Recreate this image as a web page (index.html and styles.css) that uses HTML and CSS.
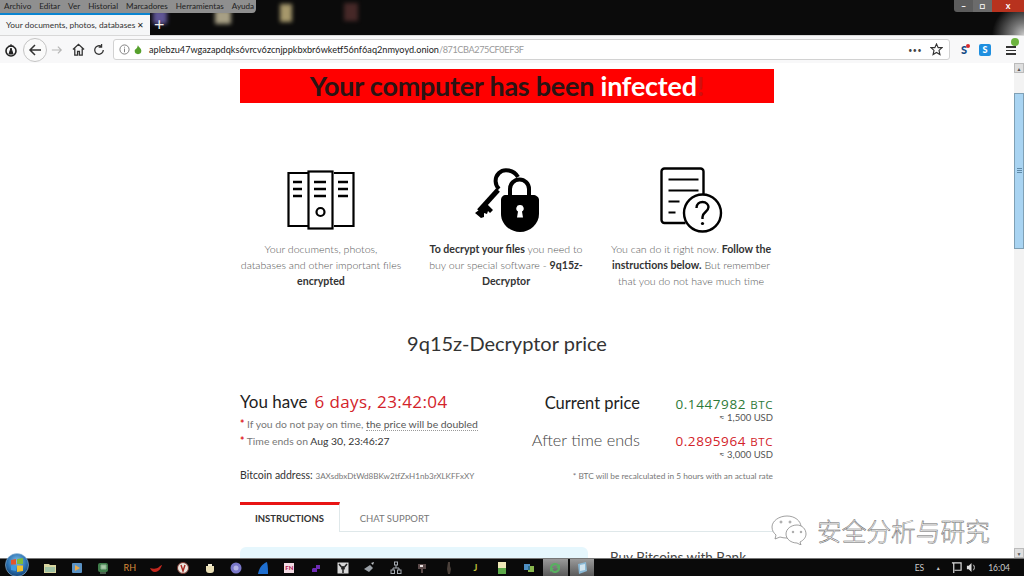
FILE: index.html
```html
<!DOCTYPE html>
<html lang="en">
<head>
<meta charset="utf-8">
<title>Your documents, photos, databases</title>
<link rel="stylesheet" href="styles.css">
</head>
<body>
<div class="screen">
  <header class="chrome">
    <div class="titlearea">
      <div class="desk-icon di1"></div><div class="desk-icon di2"></div><div class="desk-icon di3"></div><div class="desk-icon di4"></div>
      <nav class="menubar"><span>Archivo</span><span>Editar</span><span>Ver</span><span>Historial</span><span>Marcadores</span><span>Herramientas</span><span>Ayuda</span></nav>
      <div class="winbtns"><span class="wb wb-min">&#8211;</span><span class="wb wb-max">&#9633;</span><span class="wb wb-close">x</span></div>
      <div class="tabstrip">
        <div class="tab"><span class="tabtitle">Your documents, photos, databases</span><span class="tabx">&#10005;</span></div>
        <span class="newtab">+</span>
      </div>
    </div>
    <div class="toolbar">
      <svg class="tb-ic first" viewBox="0 0 14 14" width="14" height="14"><circle cx="7" cy="8" r="5" fill="none" stroke="#222" stroke-width="1.6"/><path d="M7 1v3M4.500 3h5M7 5l-2 6h4z" stroke="#222" fill="#222" stroke-width="1"/></svg>
      <span class="backbtn"><svg viewBox="0 0 14 14" width="14" height="14"><path d="M13 7H2M7 2L2 7l5 5" fill="none" stroke="#333" stroke-width="1.500"/></svg></span>
      <svg class="tb-ic fwd" viewBox="0 0 14 14" width="12" height="12"><path d="M1 7h11M8 3l4 4-4 4" fill="none" stroke="#b5b5b5" stroke-width="1.300"/></svg>
      <svg class="tb-ic home" viewBox="0 0 14 14" width="13" height="13"><path d="M1 7l6-5.500L13 7M3 6v7h3V9h2v4h3V6" fill="none" stroke="#333" stroke-width="1.400"/></svg>
      <svg class="tb-ic reload" viewBox="0 0 14 14" width="12" height="12"><path d="M12 7a5 5 0 1 1-2-4M10 0v3.600H6.600" fill="none" stroke="#333" stroke-width="1.500"/></svg>
      <div class="urlbar">
        <svg viewBox="0 0 12 12" width="11" height="11" class="url-i"><circle cx="6" cy="6" r="5" fill="none" stroke="#777"/><path d="M6 5v4M6 3v1" stroke="#777"/></svg>
        <svg viewBox="0 0 12 12" width="10" height="12" class="url-o"><path d="M6 0c0 2 4 4 4 7a4 4 0 0 1-8 0c0-2 2-2 3-4z" fill="#56a02c"/></svg>
        <span class="url-text">aplebzu47wgazapdqks6vrcv6zcnjppkbxbr6wketf56nf6aq2nmyoyd.onion<span class="url-path">/871CBA275CF0EF3F</span></span>
        <span class="url-dots">&#8226;&#8226;&#8226;</span>
        <svg viewBox="0 0 14 14" width="13" height="13" class="url-star"><path d="M7 1l1.800 4H13l-3.300 3 1 4.400L7 10.200 3.300 12.400l1-4.400L1 5h4.200z" fill="none" stroke="#333" stroke-width="1.200"/></svg>
      </div>
      <span class="ext ext1">S<b></b></span>
      <span class="ext ext2">S</span>
      <span class="hamb"><i></i><i></i><i></i><b></b></span>
    </div>
  </header>

  <main class="viewport">
    <div class="page">
      <h1 class="banner">Your computer has been <span class="wht">infected</span><span class="excl">!</span></h1>
      <section class="features">
        <article class="feature">
          <svg class="ficon" viewBox="0 0 68 60" width="68" height="60"><g fill="none" stroke="#000" stroke-width="2.200"><path d="M21 3H1.500v53H21"/><rect x="21.500" y="1.500" width="24" height="57"/><path d="M47 3h19.500v53H47"/><circle cx="33.500" cy="42" r="4"/></g><path d="M6 12h9M6 19h9M6 26h9M27 12h12M27 19h12M27 26h12M51 12h10M51 19h10M51 26h10" stroke="#000" stroke-width="2.400"/></svg>
          <p>Your documents, photos,<br>databases and other important files<br><strong>encrypted</strong></p>
        </article>
        <article class="feature">
          <svg class="ficon" viewBox="-2 0 68 66" width="68" height="66"><g fill="none" stroke="#000"><path d="M44 10C40 3 30 1 25 6c-5 5-4 12 0 16" stroke-width="4"/><path d="M24 23L5 44" stroke-width="5"/><path d="M36 29v-7a9.500 9.500 0 0 1 19 0v7" stroke-width="4"/></g><path d="M13 37l6 6-3 3-2-2-1 3-3-1 0 4-3 1-6-5z" fill="#000"/><path d="M27 33c0-3 2-5 5-5h27c3 0 6 2 6 5v14c0 10-9 18-19 18S27 57 27 47z" fill="#000"/><path d="M46 38a3.500 3.500 0 0 1 2 6.500l1 6h-6l1-6A3.500 3.500 0 0 1 46 38z" fill="#fff"/></svg>
          <p><strong>To decrypt your files</strong> you need to<br>buy our special software - <strong>9q15z-</strong><br><strong>Decryptor</strong></p>
        </article>
        <article class="feature">
          <svg class="ficon" viewBox="-1.500 0 68 66" width="68" height="66"><path d="M45 28V4.500A3 3 0 0 0 42 1.500H6a3 3 0 0 0-3 3V53a3 3 0 0 0 3 3h21" fill="none" stroke="#000" stroke-width="2.400"/><path d="M10 12.500h30M10 23.500h30M10 34.500h11M10 45.500h7" stroke="#000" stroke-width="2.200"/><circle cx="44" cy="46" r="18.500" fill="#fff" stroke="#000" stroke-width="2.400"/><path d="M38 41c0-4 3-6 6-6 4 0 6 3 6 5 0 5-6 5-6 10v2" fill="none" stroke="#000" stroke-width="2.400"/><circle cx="44" cy="56.500" r="1.600"/></svg>
          <p>You can do it right now. <strong>Follow the</strong><br><strong>instructions below.</strong> But remember<br>that you do not have much time</p>
        </article>
      </section>
      <h2 class="price-title">9q15z-Decryptor price</h2>
      <section class="pricing">
        <div class="left">
          <div class="timer"><span class="have">You have</span><span class="count">6 days, 23:42:04</span></div>
          <p class="note"><em>*</em> If you do not pay on time, <span class="dbl">the price will be doubled</span></p>
          <p class="note"><em>*</em> Time ends on <strong>Aug 30, 23:46:27</strong></p>
          <p class="addr"><strong>Bitcoin address:</strong> <span>3AXsdbxDtWd8BKw2tfZxH1nb3rXLKFFxXY</span></p>
        </div>
        <div class="right">
          <div class="row row1"><span class="plabel">Current price</span><span class="amount grn">0.1447982 <small>BTC</small></span></div>
          <div class="usd">&#8776; 1,500 USD</div>
          <div class="row row2"><span class="plabel lt">After time ends</span><span class="amount red">0.2895964 <small>BTC</small></span></div>
          <div class="usd usd2">&#8776; 3,000 USD</div>
          <div class="recalc">* BTC will be recalculated in 5 hours with an actual rate</div>
        </div>
      </section>
      <div class="tabs"><span class="ptab active">INSTRUCTIONS</span><span class="ptab">CHAT SUPPORT</span></div>
      <div class="below">
        <div class="infobox"></div>
        <div class="buy">Buy Bitcoins with Bank</div>
      </div>
    </div>
    <aside class="scrollbar"><span class="sb-btn">&#9650;</span><span class="sb-gap"></span><span class="sb-thumb"><i></i></span><span class="sb-track"></span><span class="sb-btn">&#9660;</span></aside>
    <div class="watermark">
      <svg viewBox="0 0 40 30" width="40" height="30"><g fill="#fff" stroke="#777" stroke-width=".7"><path d="M16 1C8 1 1 6 1 12c0 4 2 6 4 8l-1 4 5-2c2 .6 4 1 6 1C24 23 30 18 30 12S24 1 16 1z"/><path d="M26 10c-6 0-11 4-11 9s5 9 11 9l4 2-1-3c4-2 6-5 6-8 0-5-4-9-9-9z"/><circle cx="10" cy="7" r="1"/><circle cx="19" cy="7" r="1"/><circle cx="22" cy="17" r=".8"/><circle cx="30" cy="17" r=".8"/></g></svg>
      <span>安全分析与研究</span>
    </div>
  </main>

  <footer class="taskbar">
    <svg class="orb" viewBox="0 0 24 24" width="24" height="24"><defs><radialGradient id="og" cx=".5" cy=".35" r=".7"><stop offset="0" stop-color="#7fc0ea"/><stop offset=".6" stop-color="#2a6fb0"/><stop offset="1" stop-color="#123a66"/></radialGradient></defs><circle cx="12" cy="12" r="11.500" fill="url(#og)" stroke="#9cc0dc" stroke-width=".6"/><path d="M6 7l5-1v5.500H6z" fill="#e2552b"/><path d="M12 6l6-1v6h-6z" fill="#7cbb3a"/><path d="M6 12.500h5V18l-5-1z" fill="#3f9be0"/><path d="M12 12.500h6V18l-6 1z" fill="#f2c12e"/></svg>
    <div class="tasks">
      <span class="cell"><svg viewBox="0 0 14 14" width="14" height="14"><path d="M1 3h5l1 1h6v8H1z" fill="#d8d59f"/><path d="M2 6h10v5H2z" fill="#9fc2a5"/></svg></span>
      <span class="cell"><svg viewBox="0 0 14 14" width="14" height="14"><rect x="2" y="2" width="10" height="10" rx="1" fill="#5a92c4"/><path d="M5 4l5 3-5 3z" fill="#e8a94a"/></svg></span>
      <span class="cell"><svg viewBox="0 0 14 14" width="14" height="14"><rect x="2" y="2" width="10" height="9" rx="2" fill="#3f7d4a"/><path d="M5 4h5v4H5zM4 12h6" fill="#a7c9a5" stroke="#8ab090"/></svg></span>
      <span class="cell rh">RH</span>
      <span class="cell"><svg viewBox="0 0 14 14" width="14" height="14"><path d="M1 7c3 1 7 1 9-1 1-1 2-2 3-2-1 3-3 7-7 7-3 0-4-2-5-4z" fill="#c4281f"/></svg></span>
      <span class="cell"><svg viewBox="0 0 14 14" width="14" height="14"><circle cx="7" cy="7" r="5.500" fill="#ece6de" stroke="#7a3a32"/><path d="M5 4l2 6 2-6" fill="none" stroke="#a82820" stroke-width="1.400"/></svg></span>
      <span class="cell"><svg viewBox="0 0 14 14" width="14" height="14"><path d="M3 5h8v4a3 3 0 0 1-3 3H6a3 3 0 0 1-3-3z" fill="#eadfb6"/><path d="M5 3h4v2H5z" fill="#f4eed6"/></svg></span>
      <span class="cell"><svg viewBox="0 0 14 14" width="14" height="14"><circle cx="7" cy="7" r="5.500" fill="#7a78c9"/><circle cx="7" cy="7" r="2.500" fill="#b6b4e6"/></svg></span>
      <span class="cell"><svg viewBox="0 0 14 14" width="14" height="14"><path d="M2 13C3 7 6 3 11 1c1 4 1 8 1 12z" fill="#1f6fd0"/></svg></span>
      <span class="cell"><span class="fn">FN</span></span>
      <span class="cell"><svg viewBox="0 0 14 14" width="14" height="14"><path d="M4 7h3V4h4v4H8v3H3V8z" fill="#6e2bb5"/></svg></span>
      <span class="cell"><svg viewBox="0 0 14 14" width="14" height="14"><rect x="1.500" y="1.500" width="11" height="11" fill="#d8d8d8"/><circle cx="7" cy="7" r="2" fill="#222"/><path d="M3 3l2.500 3M11 3L8.500 6M7 12V9" stroke="#222" stroke-width="1.500"/></svg></span>
      <span class="cell"><svg viewBox="0 0 14 14" width="14" height="14"><path d="M2 8l6-4 3 3-4 4z" fill="#9aa0a6"/><path d="M9 2l3-1-1 3z" fill="#c0c4c8"/></svg></span>
      <span class="cell"><svg viewBox="0 0 14 14" width="14" height="14"><g fill="none" stroke="#a6acb3"><rect x="5.500" y="1" width="3" height="3"/><rect x="2" y="9" width="3.500" height="3.500"/><rect x="8.500" y="9" width="3.500" height="3.500"/><path d="M7 4v3M4 9V7h6v2"/></g></svg></span>
      <span class="cell"><svg viewBox="0 0 14 14" width="14" height="14"><path d="M3 3h8v5H8v4H6V8H3z" fill="#5a4a4a"/><path d="M5 4h3v2H5z" fill="#e8e0e0"/></svg></span>
      <span class="cell"><svg viewBox="0 0 14 14" width="14" height="14"><path d="M6 1h2v4l1 3-1 5H6l-1-5z" fill="#4a403a"/></svg></span>
      <span class="cell jj">J</span>
      <span class="cell"><svg viewBox="0 0 14 14" width="14" height="14"><path d="M3 1h8v12H3z" fill="#efe8b8"/><path d="M3 7h8v6H3z" fill="#5da94a"/></svg></span>
      <span class="cell"><svg viewBox="0 0 14 14" width="14" height="14"><path d="M2 3h6v6H2z" fill="#4f8fc4"/><path d="M6 5h6v6H6z" fill="#8ab84f"/><path d="M6 5h2v4H6z" fill="#2f6f8a"/></svg></span>
      <span class="cell act"><svg viewBox="0 0 14 14" width="14" height="14"><path d="M2 7a5 5 0 0 1 9-3l1-1v4H8l1.500-1.500A3 3 0 0 0 4 7zM12 7a5 5 0 0 1-9 3l-1 1V7h4L4.500 8.500A3 3 0 0 0 10 7z" fill="#58b060"/></svg></span>
      <span class="cell act"><svg viewBox="0 0 14 14" width="14" height="14"><path d="M3 3l8-2 1 9-8 3z" fill="#8ab9d6"/><path d="M5 4l5-1v6l-5 1z" fill="#d2e4ee"/></svg></span>
    </div>
    <div class="tray"><span>ES</span><span class="tr-up">&#9650;</span>
      <svg class="tr-net" viewBox="0 0 12 12" width="11" height="11"><path d="M1 1h10v8H4M3 1v11" fill="none" stroke="#ddd" stroke-width="1.300"/></svg>
      <svg class="tr-vol" viewBox="0 0 12 12" width="11" height="11"><path d="M1 4h2l3-3v10L3 8H1z" fill="#ddd"/><path d="M8 3c1.500 1.500 1.500 4.500 0 6" fill="none" stroke="#ddd"/></svg>
      <span class="clock">16:04</span></div>
  </footer>
</div>
</body>
</html>
```
FILE: styles.css
```css
* { box-sizing: border-box; }
html, body { margin: 0; padding: 0; overflow: hidden; }
body { font-family: Lato, "Open Sans", "Liberation Sans", sans-serif; background: #fff; }
.screen { width: 1024px; height: 576px; display: flex; flex-direction: column; overflow: hidden; position: relative; }

.chrome { flex: none; height: 63px; display: flex; flex-direction: column; }
.titlearea { height: 35px; background: radial-gradient(circle at 1024px 35px, #c8c8c8 0, #777 12px, #0b0b0b 32px); background-color: #0b0b0b; position: relative; display: flex; flex-direction: column; }
.menubar { position: relative; z-index: 1; width: 256px; height: 13px; background: #8f8f8f; border-radius: 0 0 4px 0; display: flex; gap: 8px; padding-left: 4px; font-size: 8.100px; line-height: 13px; color: #222; }
.menubar span { white-space: nowrap; }
.tabstrip { position: relative; z-index: 1; height: 22px; display: flex; align-items: center; }
.tab { width: 150px; height: 22px; background: #f5f6f7; border-top: 2px solid #0a84d0; display: flex; align-items: center; padding: 0 6px; gap: 3px; color: #333; font-size: 8.400px; }
.tabtitle { flex: 1; min-width: 0; white-space: nowrap; }
.tabx { font-size: 8px; color: #222; }
.newtab { color: #eee; font-size: 18px; line-height: 22px; margin-left: 4px; }
.desk-icon { position: absolute; filter: blur(2px); opacity: .8; }
.di1 { left: 153px; top: 10px; width: 14px; height: 14px; background: #7468b8; }
.di2 { left: 215px; top: 10px; width: 16px; height: 14px; background: #cfc5a4; }
.di3 { left: 280px; top: 4px; width: 12px; height: 18px; background: #cdbb84; }
.di4 { left: 344px; top: 3px; width: 14px; height: 18px; background: #55302f; }
.winbtns { position: absolute; right: 0; top: 0; width: 70px; height: 12px; display: flex; font-size: 9px; line-height: 11px; color: #fff; text-align: center; border-radius: 0 0 0 3px; overflow: hidden; }
.wb { display: block; font-weight: 700; }
.wb-min { width: 19px; background: #5c5c5c; }
.wb-max { width: 19px; background: #6b6b6b; }
.wb-close { flex: 1; background: #b8321e; }

.toolbar { height: 28px; background: #f8f8f9; border-top: 1px solid #d8d8d8; display: flex; align-items: center; padding-left: 4px; }
.tb-ic { flex: none; }
.first { margin-right: 5px; }
.backbtn { flex: none; width: 24px; height: 24px; border: 1px solid #c4c4c4; border-radius: 50%; background: #fafafa; display: flex; align-items: center; justify-content: center; }
.fwd { margin-left: 4px; }
.home { margin-left: 8.500px; }
.reload { margin-left: 8.500px; }
.urlbar { flex: none; margin-left: 8px; width: 837px; height: 21px; background: #fff; border: 1px solid #d2d2d2; border-radius: 3px; display: flex; align-items: center; padding: 0 3px 0 5px; }
.url-i { margin-right: 3px; flex: none; }
.url-o { margin-right: 6px; flex: none; }
.url-text { flex: 1; font-size: 9.150px; color: #222; white-space: nowrap; }
.url-path { color: #9a9a9a; letter-spacing: -.4px; }
.url-dots { font-size: 7px; color: #444; margin-right: 8px; letter-spacing: .5px; }
.url-star { margin-right: 3px; }
.ext { flex: none; width: 12px; height: 12px; font-size: 11px; line-height: 12px; font-weight: 900; text-align: center; position: relative; }
.ext1 { margin-left: 8px; color: #124a86; }
.ext1 b { position: absolute; right: 0; top: 0; width: 4px; height: 4px; border-radius: 50%; background: #d8282a; }
.ext2 { margin-left: 9px; background: #1f8fe0; color: #fff; border-radius: 2px; font-size: 9px; }
.hamb { flex: none; margin-left: 15px; width: 10px; display: flex; flex-direction: column; gap: 2px; position: relative; top: 1px; }
.hamb i { display: block; height: 1.500px; background: #333; }
.hamb b { position: absolute; right: -3px; top: -8px; width: 8px; height: 8px; border-radius: 50%; background: #6cb33f; }

.viewport { flex: 1; min-height: 0; display: flex; position: relative; background: #fff; overflow: hidden; }
.page { width: 1014px; padding: 6px 0 0 240px; overflow: hidden; }
.page > * { width: 534px; }
.banner { margin: 0; height: 34px; background: #f00; color: #2a1414; font-size: 26.900px; font-weight: 700; line-height: 33px; text-align: center; letter-spacing: -.2px; }
.wht { color: #fff; }
.excl { color: #d01010; }
.features { display: grid; grid-template-columns: 162px 162px 162px; column-gap: 23px; margin-top: 64px; }
.feature { display: flex; flex-direction: column; align-items: center; }
.ficon { display: block; height: 66px; }
.feature p { margin: 8px 0 0; font-size: 10.600px; line-height: 16px; color: #555; text-align: center; font-weight: 300; white-space: nowrap; }
.feature strong { color: #333; font-weight: 700; }
.price-title { margin: 40px 0 0; font-size: 20px; line-height: 28px; font-weight: 400; color: #333; text-align: center; }
.pricing { display: flex; justify-content: space-between; margin-top: 35px; }
.left { width: 260px; }
.timer { display: flex; align-items: baseline; gap: 7px; height: 20px; line-height: 20px; }
.have { font-size: 17px; color: #222; }
.count { font-size: 17px; color: #d3222a; letter-spacing: .4px; font-family: "Open Sans", sans-serif; }
.note { margin: 6px 0 0; font-size: 10.400px; line-height: 12px; color: #777; }
.note + .note { margin-top: 5px; }
.note em { color: #e01a1a; font-style: normal; font-weight: 700; }
.note strong { color: #333; font-weight: 400; }
.dbl { color: #555; border-bottom: 1px dotted #999; }
.addr { margin: 21px 0 0; font-size: 10.500px; line-height: 14px; color: #333; white-space: nowrap; }
.addr strong { font-weight: 400; }
.addr span { font-size: 8.100px; color: #777; }
.right { width: 240px; padding-right: 1px; display: flex; flex-direction: column; align-items: stretch; }
.row { display: flex; justify-content: space-between; align-items: baseline; height: 20px; line-height: 20px; }
.row1 { margin-top: 1px; }
.row2 { margin-top: 6px; }
.plabel { width: 119px; text-align: right; font-size: 16.500px; color: #222; white-space: nowrap; margin-left: -13px; }
.plabel.lt { color: #444; font-weight: 300; font-size: 16.300px; }
.amount { font-size: 13.500px; font-family: "Open Sans", sans-serif; letter-spacing: .6px; }
.amount small { font-size: 11.500px; }
.grn { color: #2d7a38; }
.red { color: #d3222a; }
.usd { text-align: right; font-size: 9.500px; line-height: 12px; color: #555; margin-top: -1px; }
.usd2 { margin-top: -1px; }
.recalc { margin-top: 9px; text-align: right; font-size: 8.300px; line-height: 12px; color: #777; white-space: nowrap; }
.tabs { display: flex; margin-top: 19px; height: 30px; border-bottom: 1px solid #dfe8ea; width: 534px; }
.ptab { width: 109px; height: 30px; font-size: 9.500px; line-height: 33px; text-align: center; color: #777; }
.ptab.active { width: 100px; border-top: 3px solid #e81414; border-right: 1px solid #dfe8ea; line-height: 27px; color: #333; font-weight: 700; background: #fff; }
.below { display: flex; margin-top: 15px; gap: 22px; width: 534px; }
.infobox { flex: none; width: 348px; height: 40px; background: #e6f7fd; border-radius: 6px; }
.buy { white-space: nowrap; font-size: 13.500px; line-height: 20px; color: #444; }

.scrollbar { width: 10px; flex: none; display: flex; flex-direction: column; background: #f3f3f3; }
.sb-btn { height: 10px; flex: none; background: #dedede; font-size: 5px; line-height: 10px; text-align: center; color: #555; border: 1px solid #bbb; }
.sb-gap { height: 20px; flex: none; }
.sb-thumb { height: 156px; flex: none; background: #a9d4f2; border: 1px solid #7fa0b5; display: flex; align-items: center; justify-content: center; }
.sb-thumb i { display: block; width: 5px; height: 6px; background: repeating-linear-gradient(#5f8aa8 0 1px, transparent 1px 2px); }
.sb-track { flex: 1; }

.watermark { position: absolute; left: 771px; top: 451px; display: flex; align-items: center; gap: 6px; }
.watermark span { font-family: "Noto Sans CJK SC", sans-serif; font-size: 24.700px; line-height: 32px; font-weight: 300; color: #fff; -webkit-text-stroke: .5px #666; white-space: nowrap; }

.taskbar { flex: none; height: 18px; background: #0a0a0a; border-top: 1px solid #777; display: flex; align-items: center; color: #ccc; font-size: 8.500px; position: relative; }
.orb { position: absolute; left: 5px; top: -6px; }
.tasks { display: flex; margin-left: 36.700px; align-items: center; height: 17px; }
.cell { flex: none; width: 26.600px; height: 17px; display: flex; align-items: center; justify-content: center; font-size: 9px; }
.rh { color: #d88a3a; }
.jj { color: #c2c23a; font-weight: 700; }
.fn { display: block; width: 10px; height: 10px; background: #f3dbe4; color: #b02050; font-size: 6px; line-height: 10px; text-align: center; font-weight: 900; }
.act { background: linear-gradient(#9a9a9a, #5a5a5a); border: 1px solid #0a0a0a; border-width: 0 1px; }
.tray { margin-left: auto; display: flex; align-items: center; padding-right: 14px; }
.tr-up { font-size: 5px; margin-left: 11.500px; }
.tr-net { margin-left: 10px; }
.tr-vol { margin-left: 4px; }
.clock { margin-left: 11.500px; }
```
